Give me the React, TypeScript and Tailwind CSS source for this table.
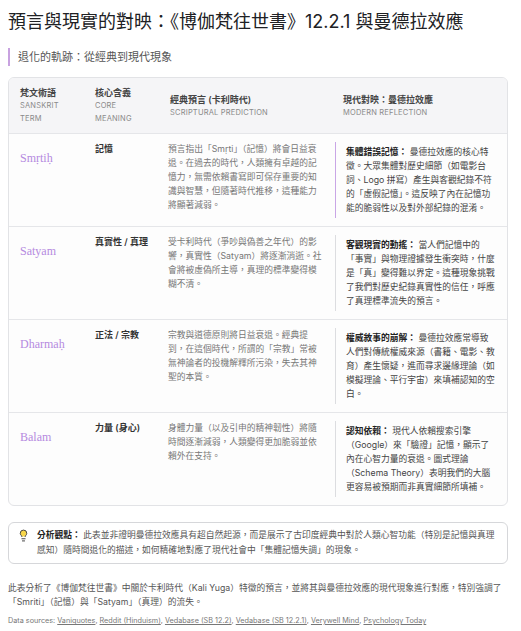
import React from 'react';
import { Lightbulb } from 'lucide-react';

const rows = [
  {
    term: 'Smṛtiḥ',
    meaning: '記憶',
    prediction:
      '預言指出「Smṛti」（記憶）將會日益衰退。在過去的時代，人類擁有卓越的記憶力，無需依賴書寫即可保存重要的知識與智慧，但隨著時代推移，這種能力將顯著減弱。',
    label: '集體錯誤記憶：',
    reflection:
      '曼德拉效應的核心特徵。大眾集體對歷史細節（如電影台詞、Logo 拼寫）產生與客觀紀錄不符的「虛假記憶」。這反映了內在記憶功能的脆弱性以及對外部紀錄的混淆。',
    accent: true,
  },
  {
    term: 'Satyam',
    meaning: '真實性 / 真理',
    prediction:
      '受卡利時代（爭吵與偽善之年代）的影響，真實性（Satyam）將逐漸消逝。社會將被虛偽所主導，真理的標準變得模糊不清。',
    label: '客觀現實的動搖：',
    reflection:
      '當人們記憶中的「事實」與物理證據發生衝突時，什麼是「真」變得難以界定。這種現象挑戰了我們對歷史紀錄真實性的信任，呼應了真理標準流失的預言。',
    accent: false,
  },
  {
    term: 'Dharmaḥ',
    meaning: '正法 / 宗教',
    prediction:
      '宗教與道德原則將日益衰退。經典提到，在這個時代，所謂的「宗教」常被無神論者的投機解釋所污染，失去其神聖的本質。',
    label: '權威敘事的崩解：',
    reflection:
      '曼德拉效應常導致人們對傳統權威來源（書籍、電影、教育）產生懷疑，進而尋求邊緣理論（如模擬理論、平行宇宙）來填補認知的空白。',
    accent: false,
  },
  {
    term: 'Balam',
    meaning: '力量 (身心)',
    prediction:
      '身體力量（以及引申的精神韌性）將隨時間逐漸減弱，人類變得更加脆弱並依賴外在支持。',
    label: '認知依賴：',
    reflection:
      '現代人依賴搜索引擎（Google）來「驗證」記憶，顯示了內在心智力量的衰退。圖式理論（Schema Theory）表明我們的大腦更容易被預期而非真實細節所填補。',
    accent: false,
  },
];

const sources = [
  'Vaniquotes',
  'Reddit (Hinduism)',
  'Vedabase (SB 12.2)',
  'Vedabase (SB 12.2.1)',
  'Verywell Mind',
  'Psychology Today',
];

const font = { fontFamily: 'Inter, "Noto Sans CJK TC", sans-serif' };

const HeaderCell = ({ cn, en, className = '' }: { cn: string; en: string[]; className?: string }) => (
  <div className={`flex flex-col justify-center ${className}`}>
    <div className="text-[9px] leading-[13px] font-semibold text-[#444]">{cn}</div>
    {en.map((e) => (
      <div key={e} className="text-[7.5px] leading-[13px] uppercase tracking-wide text-[#8a8a8a]">
        {e}
      </div>
    ))}
  </div>
);

export default function App() {
  return (
    <div className="bg-white min-h-screen px-2 pt-[10px] pb-4" style={font}>
      <h1 className="text-[18px] leading-[24px] text-[#202124] font-normal">
        預言與現實的對映：《博伽梵往世書》12.2.1 與曼德拉效應
      </h1>

      <div className="mt-[14px] border-l-2 border-[#c8a2e0] pl-2 text-[11px] leading-[18px] text-[#555]">
        退化的軌跡：從經典到現代現象
      </div>

      <div className="mt-[11px] w-[500px] rounded-md border border-[#e2e3e6] bg-[#fdfdfd] overflow-hidden">
        <div className="grid grid-cols-[75px_73px_167px_183px] bg-[#f5f5f7] py-[8px]">
          <HeaderCell className="pl-[11px]" cn="梵文術語" en={['Sanskrit', 'Term']} />
          <HeaderCell className="pl-[11px]" cn="核心含義" en={['Core', 'Meaning']} />
          <HeaderCell className="pl-[13px]" cn="經典預言 (卡利時代)" en={['Scriptural Prediction']} />
          <HeaderCell className="pl-[19px]" cn="現代對映：曼德拉效應" en={['Modern Reflection']} />
        </div>

        {rows.map((r) => (
          <div key={r.term} className="grid grid-cols-[75px_73px_167px_183px] border-t border-[#e5e6e9] py-[8px]">
            <div className="pl-[11px] pt-[2px]">
              <span
                className="text-[12px] leading-[16px] text-[#b58ae0]"
                style={{ fontFamily: '"Liberation Serif", serif' }}
              >
                {r.term}
              </span>
            </div>
            <div className="pl-[11px] text-[9px] leading-[14px] font-semibold text-[#333]">{r.meaning}</div>
            <div className="pl-[11px] text-[8.75px] leading-[14px] text-[#777]">{r.prediction}</div>
            <div className="pl-[11px] pr-[12px]">
              <div
                className={`border-l py-[3px] pl-[10px] text-[8.75px] leading-[14px] text-[#444] ${
                  r.accent ? 'border-[#c9a6e6]' : 'border-[#dcdde0]'
                }`}
              >
                <span className="font-semibold text-[#222]">{r.label}</span> {r.reflection}
              </div>
            </div>
          </div>
        ))}
      </div>

      <div className="mt-4 w-[500px] flex gap-[7px] rounded-md border border-[#d6d7da] bg-white px-[8px] py-[5px]">
        <Lightbulb className="mt-[1px] h-[13px] w-[13px] shrink-0 text-[#444] fill-[#f7d64a]" strokeWidth={1.8} />
        <p className="text-[8.75px] leading-[15px] text-[#555]">
          <span className="font-semibold text-[#222]">分析觀點：</span>{' '}
          此表並非證明曼德拉效應具有超自然起源，而是展示了古印度經典中對於人類心智功能（特別是記憶與真理感知）隨時間退化的描述，如何精確地對應了現代社會中「集體記憶失調」的現象。
        </p>
      </div>

      <p className="mt-[17px] w-[500px] text-[8.75px] leading-[14px] text-[#555]">
        此表分析了《博伽梵往世書》中關於卡利時代（Kali Yuga）特徵的預言，並將其與曼德拉效應的現代現象進行對應，特別強調了「Smriti」（記憶）與「Satyam」（真理）的流失。
      </p>

      <p className="mt-[6px] text-[7.25px] leading-[12px] text-[#777]">
        Data sources:{' '}
        {sources.map((s, i) => (
          <React.Fragment key={s}>
            <span className="underline">{s}</span>
            {i < sources.length - 1 ? ', ' : ''}
          </React.Fragment>
        ))}
      </p>
    </div>
  );
}
